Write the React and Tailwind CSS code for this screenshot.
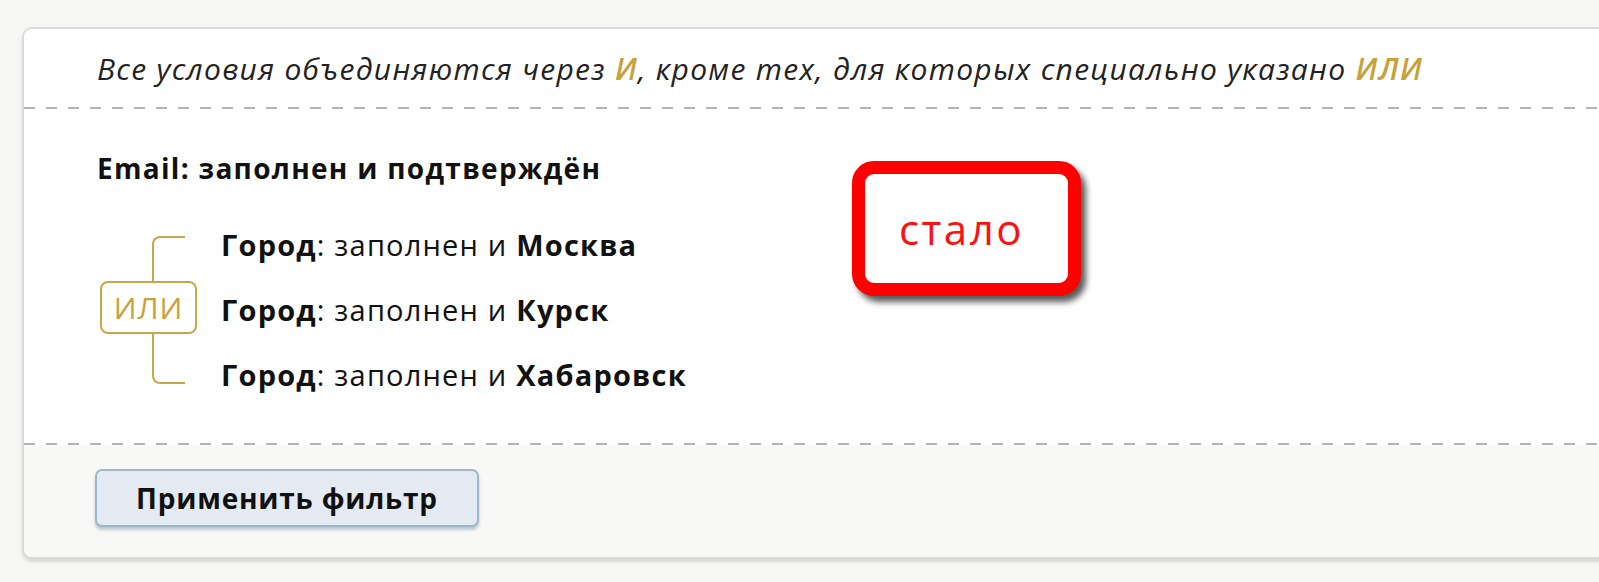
export default function App() {
  const gold = "text-[#c8a13a]";
  const rows = ["Москва", "Курск", "Хабаровск"];
  return (
    <div className="w-[1599px] h-[582px] overflow-hidden bg-[#f6f6f4] pt-[27px] pl-[22px] font-['Open_Sans',sans-serif] text-[#111] relative">
      <div className="w-[1640px] bg-white border-2 border-[#dadada] rounded-[10px] shadow-[0_3px_3px_rgba(0,0,0,0.12)] overflow-hidden">
        <div className="h-[78px] flex items-center pl-[73px] italic text-[30px] tracking-[1.3px] text-[#222]">
          <span>
            Все условия объединяются через <span className={`${gold} font-semibold`}>И</span>, кроме тех, для которых специально указано <span className={`${gold} font-semibold`}>ИЛИ</span>
          </span>
        </div>
        <div className="h-[2px] bg-[repeating-linear-gradient(to_right,#b4b4b4_0_11px,transparent_11px_22px)]" />
        <div className="pl-[73px] pt-[39px] pb-[48px]">
          <div className="h-[40px] flex items-center font-bold text-[28px] tracking-[1.3px]">Email: заполнен и подтверждён</div>
          <div className="mt-[37px] flex items-center">
            <div className="ml-[3px] w-[97px] flex flex-col">
              <div className="ml-[52px] w-[33px] h-[45px] border-l-2 border-t-2 border-[#c9a64a] rounded-tl-[8px]" />
              <div className="h-[53px] w-[97px] border-[2.5px] border-[#c9a64a] rounded-[8px] flex items-center justify-center text-[#c8a13a] text-[30px] tracking-[1px]">ИЛИ</div>
              <div className="ml-[52px] w-[33px] h-[50px] border-l-2 border-b-2 border-[#c9a64a] rounded-bl-[8px]" />
            </div>
            <div className="ml-[24px] flex flex-col gap-[25px] text-[29px] tracking-[1.2px]">
              {rows.map((c) => (
                <div key={c} className="h-[40px] flex items-center">
                  <span className="font-bold">Город</span>: заполнен и&nbsp;<span className="font-bold">{c}</span>
                </div>
              ))}
            </div>
          </div>
        </div>
        <div className="h-[2px] bg-[repeating-linear-gradient(to_right,#b4b4b4_0_11px,transparent_11px_22px)]" />
        <div className="bg-[#f8f8f6] h-[112px] pl-[71px] pt-[24px]">
          <button className="w-[384px] h-[58px] rounded-[7px] bg-[#e3eaf2] border-2 border-[#9db8cc] shadow-[0_3px_3px_rgba(80,110,140,0.35)] font-bold text-[28px] tracking-[0.8px] text-[#111] flex items-center justify-center">
            Применить фильтр
          </button>
        </div>
      </div>
      <div className="absolute left-[852px] top-[161px] w-[229px] h-[135px] border-[13px] border-[#ff0000] rounded-[22px] bg-white shadow-[5px_6px_6px_rgba(0,0,0,0.65)] flex items-center justify-center pr-[10px] text-[#ff1010] text-[42px] tracking-[2.5px]">
        стало
      </div>
    </div>
  );
}
